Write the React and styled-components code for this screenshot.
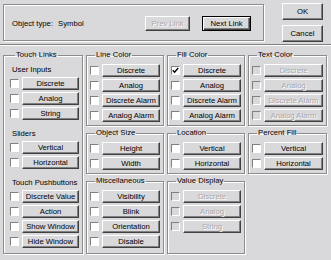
import React from 'react'
import styled, { createGlobalStyle } from 'styled-components'

const face = '#d9d8db'

const GlobalStyle = createGlobalStyle`
  html, body {
    margin: 0;
    padding: 0;
    background: ${face};
  }
  body {
    font-family: "Liberation Sans", Arial, sans-serif;
    font-size: 7.7px;
    color: #000;
  }
`

const Dialog = styled.div`
  width: 331px;
  height: 260px;
  background: ${face};
  overflow: hidden;
`

const TopBar = styled.div`
  display: flex;
  align-items: flex-start;
  height: 45px;
  box-sizing: border-box;
  padding: 3px 0 0 3px;
  border-bottom: 1px solid #808080;
  box-shadow: 0 1px 0 #fff;
`

const InfoFrame = styled.div`
  margin-top: 1px;
  width: 261px;
  height: 37px;
  box-sizing: border-box;
  border: 1px solid #8c8c8c;
  box-shadow: inset 1px 1px 0 #fff, 1px 1px 0 #fff;
  display: flex;
  align-items: center;
  padding: 2px 12px 0 8px;
`

const InfoLabel = styled.span`
  margin-right: 5px;
`

const Spacer = styled.span`
  flex: ${p => (p.$w ? 'none' : 1)};
  width: ${p => (p.$w ? `${p.$w}px` : 'auto')};
`

const SideButtons = styled.div`
  display: flex;
  flex-direction: column;
  gap: 5px;
  margin-left: 18px;
`

const Button = styled.button`
  font-family: inherit;
  font-size: 7.7px;
  line-height: 1;
  margin: 0;
  padding: 0;
  box-sizing: border-box;
  width: ${p => (p.$w ? `${p.$w}px` : 'auto')};
  flex: ${p => (p.$w ? 'none' : 1)};
  min-width: 0;
  height: ${p => p.$h || 13}px;
  background: ${face};
  color: ${p => (p.disabled ? '#a9a8ab' : '#000')};
  text-shadow: ${p => (p.disabled ? '1px 1px 0 #fff' : 'none')};
  border: 1px solid;
  border-color: ${p => (p.$default ? '#000' : '#fff #404040 #404040 #fff')};
  box-shadow: ${p =>
    p.$default
      ? 'inset 1px 1px 0 #fff, inset -1px -1px 0 #404040, inset -2px -2px 0 #808080'
      : 'inset -1px -1px 0 #808080'};
  white-space: nowrap;
  overflow: hidden;
  cursor: default;
`

const Main = styled.div`
  display: grid;
  grid-template-columns: 80px 78px 78px 79px;
  column-gap: 3px;
  height: 215px;
  box-sizing: border-box;
  padding: 5px 0 6px 3px;
`

const Column = styled.div`
  display: flex;
  flex-direction: column;
  gap: 2px;
  min-height: 0;
`

const Group = styled.fieldset`
  margin: 0;
  min-width: 0;
  padding: 4px 3px 3px ${p => p.$inset || 3}px;
  border: 1px solid #8c8c8c;
  box-shadow: inset 1px 1px 0 #fff, 1px 1px 0 #fff;
  flex: ${p => (p.$grow ? 1 : 'none')};
  display: flex;
  flex-direction: column;
  gap: ${p => p.$gap || 2}px;
`

const Caption = styled.legend`
  padding: 0 1px;
  margin-left: 5px;
  line-height: 10px;
  font-size: 7.7px;
  color: #000;
  white-space: nowrap;
`

const Section = styled.div`
  display: flex;
  flex-direction: column;
  gap: 2px;
`

const SubLabel = styled.div`
  height: 11px;
  line-height: 11px;
  margin-left: 2px;
  white-space: nowrap;
`

const Row = styled.div`
  display: flex;
  align-items: center;
  gap: 3px;
  height: 13px;
`

const Box = styled.span`
  width: 9px;
  height: 9px;
  flex: none;
  box-sizing: border-box;
  border: 1px solid;
  border-color: #808080 #fff #fff #808080;
  background: ${p => (p.$disabled ? face : '#fff')};
  display: flex;
  align-items: center;
  justify-content: center;
`

const Check = () => (
  <svg width="7" height="7" viewBox="0 0 7 7">
    <path d="M0.8 3.2 L2.6 5.2 L6.2 1" fill="none" stroke="#000" strokeWidth="1.4" />
  </svg>
)

const Option = ({ label, checked, disabled }) => (
  <Row>
    <Box $disabled={disabled}>{checked && <Check />}</Box>
    <Button disabled={disabled}>{label}</Button>
  </Row>
)

const OptionGroup = ({ title, items, grow, disabled, checkedItem }) => (
  <Group $grow={grow}>
    <Caption>{title}</Caption>
    {items.map(item => (
      <Option key={item} label={item} checked={item === checkedItem} disabled={disabled} />
    ))}
  </Group>
)

const alarms = ['Discrete', 'Analog', 'Discrete Alarm', 'Analog Alarm']
const axes = ['Vertical', 'Horizontal']

const touchLinks = [
  { label: 'User Inputs', items: ['Discrete', 'Analog', 'String'] },
  { label: 'Sliders', items: axes },
  { label: 'Touch Pushbuttons', items: ['Discrete Value', 'Action', 'Show Window', 'Hide Window'] },
]

const App = () => (
  <Dialog>
    <GlobalStyle />
    <TopBar>
      <InfoFrame>
        <InfoLabel>Object type:</InfoLabel>
        <span>Symbol</span>
        <Spacer />
        <Button $w={45} $h={15} disabled>Prev Link</Button>
        <Spacer $w={12} />
        <Button $w={49} $h={15} $default>Next Link</Button>
      </InfoFrame>
      <SideButtons>
        <Button $w={41} $h={17}>OK</Button>
        <Button $w={41} $h={17}>Cancel</Button>
      </SideButtons>
    </TopBar>
    <Main>
      <Column>
        <Group $grow $inset={6} $gap={8}>
          <Caption>Touch Links</Caption>
          {touchLinks.map(section => (
            <Section key={section.label}>
              <SubLabel>{section.label}</SubLabel>
              {section.items.map(item => (
                <Option key={item} label={item} />
              ))}
            </Section>
          ))}
        </Group>
      </Column>
      <Column>
        <OptionGroup title="Line Color" items={alarms} />
        <OptionGroup title="Object Size" items={['Height', 'Width']} />
        <OptionGroup title="Miscellaneous" items={['Visibility', 'Blink', 'Orientation', 'Disable']} grow />
      </Column>
      <Column>
        <OptionGroup title="Fill Color" items={alarms} checkedItem="Discrete" />
        <OptionGroup title="Location" items={axes} />
        <OptionGroup title="Value Display" items={['Discrete', 'Analog', 'String']} grow disabled />
      </Column>
      <Column>
        <OptionGroup title="Text Color" items={alarms} disabled />
        <OptionGroup title="Percent Fill" items={axes} />
      </Column>
    </Main>
  </Dialog>
)

export default App
